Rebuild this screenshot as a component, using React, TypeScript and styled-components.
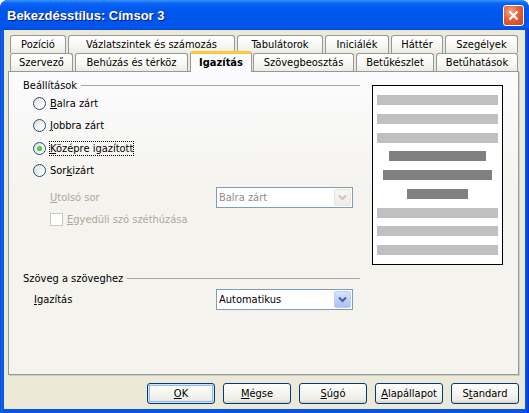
import styled, { createGlobalStyle } from 'styled-components';

const GlobalStyle = createGlobalStyle`
  html, body {
    margin: 0;
    padding: 0;
    background: #ffffff;
  }
  body {
    font-family: "DejaVu Sans Condensed", "Liberation Sans", sans-serif;
    font-size: 11px;
    color: #000000;
  }
  * {
    box-sizing: border-box;
  }
`;

const Window = styled.div`
  width: 529px;
  height: 413px;
  display: flex;
  flex-direction: column;
  border-radius: 8px 8px 0 0;
  overflow: hidden;
  background: linear-gradient(to right, #0831d9 0, #166aee 1px, #0855dd 3px, #0855dd calc(100% - 3px), #0831d9 100%);
`;

const TitleBar = styled.div`
  height: 30px;
  flex: none;
  display: flex;
  align-items: center;
  justify-content: space-between;
  padding: 0 5px 0 7px;
  background: linear-gradient(
    180deg,
    #3d95ff 0%,
    #0a66f6 10%,
    #0058ee 30%,
    #0055ea 70%,
    #0058ee 88%,
    #0049d8 100%
  );
`;

const Title = styled.span`
  color: #ffffff;
  font: bold 13px "Liberation Sans", Arial, sans-serif;
  text-shadow: 1px 1px 0 #0a1883;
`;

const CloseButton = styled.div`
  width: 21px;
  height: 21px;
  border: 1px solid #ffffff;
  border-radius: 3px;
  background: radial-gradient(circle at 35% 30%, #f3a48b 0%, #e4603a 45%, #c9421b 100%);
  display: flex;
  align-items: center;
  justify-content: center;
`;

const Client = styled.div`
  flex: 1;
  margin: 0 4px 4px 4px;
  background: #ece9d8;
  display: flex;
  flex-direction: column;
  padding: 5px 6px 0 4px;
`;

const TabRow = styled.div`
  display: flex;
  align-items: flex-end;
  gap: 2px;
  height: 18px;
  padding-left: 2px;
`;

const Tab = styled.div<{ $w: number; $active?: boolean }>`
  width: ${p => p.$w}px;
  height: ${p => (p.$active ? 21 : 18)}px;
  flex: none;
  border: 1px solid #919b9c;
  border-bottom: none;
  border-radius: 3px 3px 0 0;
  background: ${p => (p.$active ? '#fcfcfe' : 'linear-gradient(#ffffff, #f7f7f3 60%, #ebeae3)')};
  display: flex;
  align-items: center;
  justify-content: center;
  white-space: nowrap;
  font-weight: ${p => (p.$active ? 'bold' : 'normal')};
  ${p =>
    p.$active &&
    `
    border-top: 3px solid #ffc83c;
    box-shadow: inset 0 -1px 0 #fcfcfe;
    margin-bottom: -1px;
    margin-right: -1px;
    position: relative;
    z-index: 1;
    padding-bottom: 1px;
  `}
`;

const Panel = styled.div`
  width: 511px;
  height: 304px;
  flex: none;
  border: 1px solid #919b9c;
  box-shadow: 1px 1px 0 #d0cebf;
  background: linear-gradient(#fcfcfe, #f4f3ee 40%);
  display: flex;
  gap: 12px;
  padding: 6px 0 0 14px;
`;

const LeftColumn = styled.div`
  width: 337px;
  display: flex;
  flex-direction: column;
`;

const GroupHeader = styled.div<{ $mt?: number }>`
  height: 14px;
  margin-top: ${p => p.$mt ?? 0}px;
  display: flex;
  align-items: center;
  gap: 4px;
  white-space: nowrap;

  &::after {
    content: '';
    flex: 1;
    border-top: 1px solid #aca899;
  }
`;

const RadioRow = styled.div`
  height: 22.5px;
  display: flex;
  align-items: center;
  gap: 4px;
  padding-left: 10px;
`;

const RadioCircle = styled.span<{ $checked?: boolean }>`
  width: 13px;
  height: 13px;
  flex: none;
  border-radius: 50%;
  border: 1px solid #1c5180;
  background: linear-gradient(135deg, #dcdcd7 0%, #ffffff 80%);
  display: flex;
  align-items: center;
  justify-content: center;

  &::after {
    content: '';
    display: ${p => (p.$checked ? 'block' : 'none')};
    width: 5px;
    height: 5px;
    border-radius: 50%;
    background: radial-gradient(circle at 40% 40%, #5ee35a, #21a121);
  }
`;

const Label = styled.span<{ $focus?: boolean; $disabled?: boolean; $w?: number }>`
  color: ${p => (p.$disabled ? '#aca899' : '#000000')};
  outline: ${p => (p.$focus ? '1px dotted #000000' : 'none')};
  outline-offset: 0;
  white-space: nowrap;
  ${p => (p.$w ? `width: ${p.$w}px; flex: none;` : '')}
`;

const FieldRow = styled.div<{ $mt: number; $indent: number }>`
  height: 21px;
  margin-top: ${p => p.$mt}px;
  padding-left: ${p => p.$indent}px;
  display: flex;
  align-items: center;
`;

const CheckRow = styled.div`
  height: 21px;
  margin-top: 1px;
  padding-left: 27px;
  display: flex;
  align-items: center;
  gap: 4px;
`;

const CheckBox = styled.span`
  width: 13px;
  height: 13px;
  flex: none;
  border: 1px solid #cac8bb;
  background: #ffffff;
`;

const Select = styled.div<{ $disabled?: boolean }>`
  width: 137px;
  height: 21px;
  flex: none;
  border: 1px solid #7f9db9;
  background: #ffffff;
  display: flex;
  align-items: center;
  justify-content: space-between;
  padding-left: 2px;
  color: ${p => (p.$disabled ? '#8d8d8d' : '#000000')};
`;

const ArrowButton = styled.span<{ $disabled?: boolean }>`
  width: 17px;
  height: 17px;
  margin-right: 1px;
  border-radius: 2px;
  border: 1px solid ${p => (p.$disabled ? '#e8e6dc' : '#bfcff5')};
  background: ${p =>
    p.$disabled ? 'linear-gradient(#f7f6f0, #eeede5)' : 'linear-gradient(#d7e3fd, #b9cdf8 60%, #a9c1f5)'};
  display: flex;
  align-items: center;
  justify-content: center;
`;

const Preview = styled.div`
  width: 131px;
  height: 180px;
  margin-top: 7px;
  border: 1px solid #000000;
  background: #ffffff;
  display: flex;
  flex-direction: column;
  align-items: center;
  gap: 8.75px;
  padding-top: 9px;
`;

const Bar = styled.div<{ $w: number; $dark?: boolean }>`
  width: ${p => p.$w}px;
  height: 10px;
  flex: none;
  background: ${p => (p.$dark ? '#808080' : '#c0c0c0')};
`;

const ButtonRow = styled.div`
  display: flex;
  justify-content: flex-end;
  gap: 8px;
  margin-top: 8px;
`;

const Button = styled.div<{ $default?: boolean }>`
  width: 68px;
  height: 21px;
  border: 1px solid #003c74;
  border-radius: 3px;
  background: linear-gradient(#ffffff, #f4f4f0 50%, #ecebe6 85%, #d6d0c5);
  display: flex;
  align-items: center;
  justify-content: center;
  box-shadow: ${p => (p.$default ? 'inset 0 0 0 1px #cee7ff, inset 0 0 0 2px #98b8ea' : 'none')};
`;

const Chevron = ({ color }: { color: string }) => (
  <svg width="9" height="7" viewBox="0 0 9 7">
    <polyline points="1,1.5 4.5,5 8,1.5" fill="none" stroke={color} strokeWidth="2" />
  </svg>
);

const topTabs = [
  { label: 'Pozíció', w: 56 },
  { label: 'Vázlatszintek és számozás', w: 167 },
  { label: 'Tabulátorok', w: 86 },
  { label: 'Iniciálék', w: 64 },
  { label: 'Háttér', w: 52 },
  { label: 'Szegélyek', w: 73 },
];

const bottomTabs = [
  { label: 'Szervező', w: 63 },
  { label: 'Behúzás és térköz', w: 113 },
  { label: 'Igazítás', w: 62, active: true },
  { label: 'Szövegbeosztás', w: 101 },
  { label: 'Betűkészlet', w: 78 },
  { label: 'Betűhatások', w: 82 },
];

const previewBars = [
  { w: 121 },
  { w: 121 },
  { w: 121 },
  { w: 97, dark: true },
  { w: 109, dark: true },
  { w: 61, dark: true },
  { w: 121 },
  { w: 121 },
  { w: 121 },
];

export default function App() {
  return (
    <>
      <GlobalStyle />
      <Window>
        <TitleBar>
          <Title>Bekezdésstílus: Címsor 3</Title>
          <CloseButton>
            <svg width="11" height="11" viewBox="0 0 11 11">
              <path d="M1.5 1.5 L9.5 9.5 M9.5 1.5 L1.5 9.5" stroke="#ffffff" strokeWidth="2.2" />
            </svg>
          </CloseButton>
        </TitleBar>
        <Client>
          <TabRow>
            {topTabs.map(t => (
              <Tab key={t.label} $w={t.w}>
                {t.label}
              </Tab>
            ))}
          </TabRow>
          <TabRow>
            {bottomTabs.map(t => (
              <Tab key={t.label} $w={t.w} $active={t.active}>
                {t.label}
              </Tab>
            ))}
          </TabRow>
          <Panel>
            <LeftColumn>
              <GroupHeader>Beállítások</GroupHeader>
              <RadioRow>
                <RadioCircle />
                <Label>
                  <u>B</u>alra zárt
                </Label>
              </RadioRow>
              <RadioRow>
                <RadioCircle />
                <Label>
                  <u>J</u>obbra zárt
                </Label>
              </RadioRow>
              <RadioRow>
                <RadioCircle $checked />
                <Label $focus>
                  <u>K</u>özépre igazított
                </Label>
              </RadioRow>
              <RadioRow>
                <RadioCircle />
                <Label>
                  Sor<u>k</u>izárt
                </Label>
              </RadioRow>
              <FieldRow $mt={5} $indent={27}>
                <Label $disabled $w={166}>
                  <u>U</u>tolsó sor
                </Label>
                <Select $disabled>
                  Balra zárt
                  <ArrowButton $disabled>
                    <Chevron color="#c9c7ba" />
                  </ArrowButton>
                </Select>
              </FieldRow>
              <CheckRow>
                <CheckBox />
                <Label $disabled>
                  <u>E</u>gyedüli szó széthúzása
                </Label>
              </CheckRow>
              <GroupHeader $mt={41}>Szöveg a szöveghez</GroupHeader>
              <FieldRow $mt={4} $indent={11}>
                <Label $w={182}>
                  <u>I</u>gazítás
                </Label>
                <Select>
                  Automatikus
                  <ArrowButton>
                    <Chevron color="#4d6185" />
                  </ArrowButton>
                </Select>
              </FieldRow>
            </LeftColumn>
            <Preview>
              {previewBars.map((b, i) => (
                <Bar key={i} $w={b.w} $dark={b.dark} />
              ))}
            </Preview>
          </Panel>
          <ButtonRow>
            <Button $default>
              <span>
                <u>O</u>K
              </span>
            </Button>
            <Button>
              <span>
                <u>M</u>égse
              </span>
            </Button>
            <Button>
              <span>
                <u>S</u>úgó
              </span>
            </Button>
            <Button>
              <span>
                <u>A</u>lapállapot
              </span>
            </Button>
            <Button>
              <span>
                S<u>t</u>andard
              </span>
            </Button>
          </ButtonRow>
        </Client>
      </Window>
    </>
  );
}
